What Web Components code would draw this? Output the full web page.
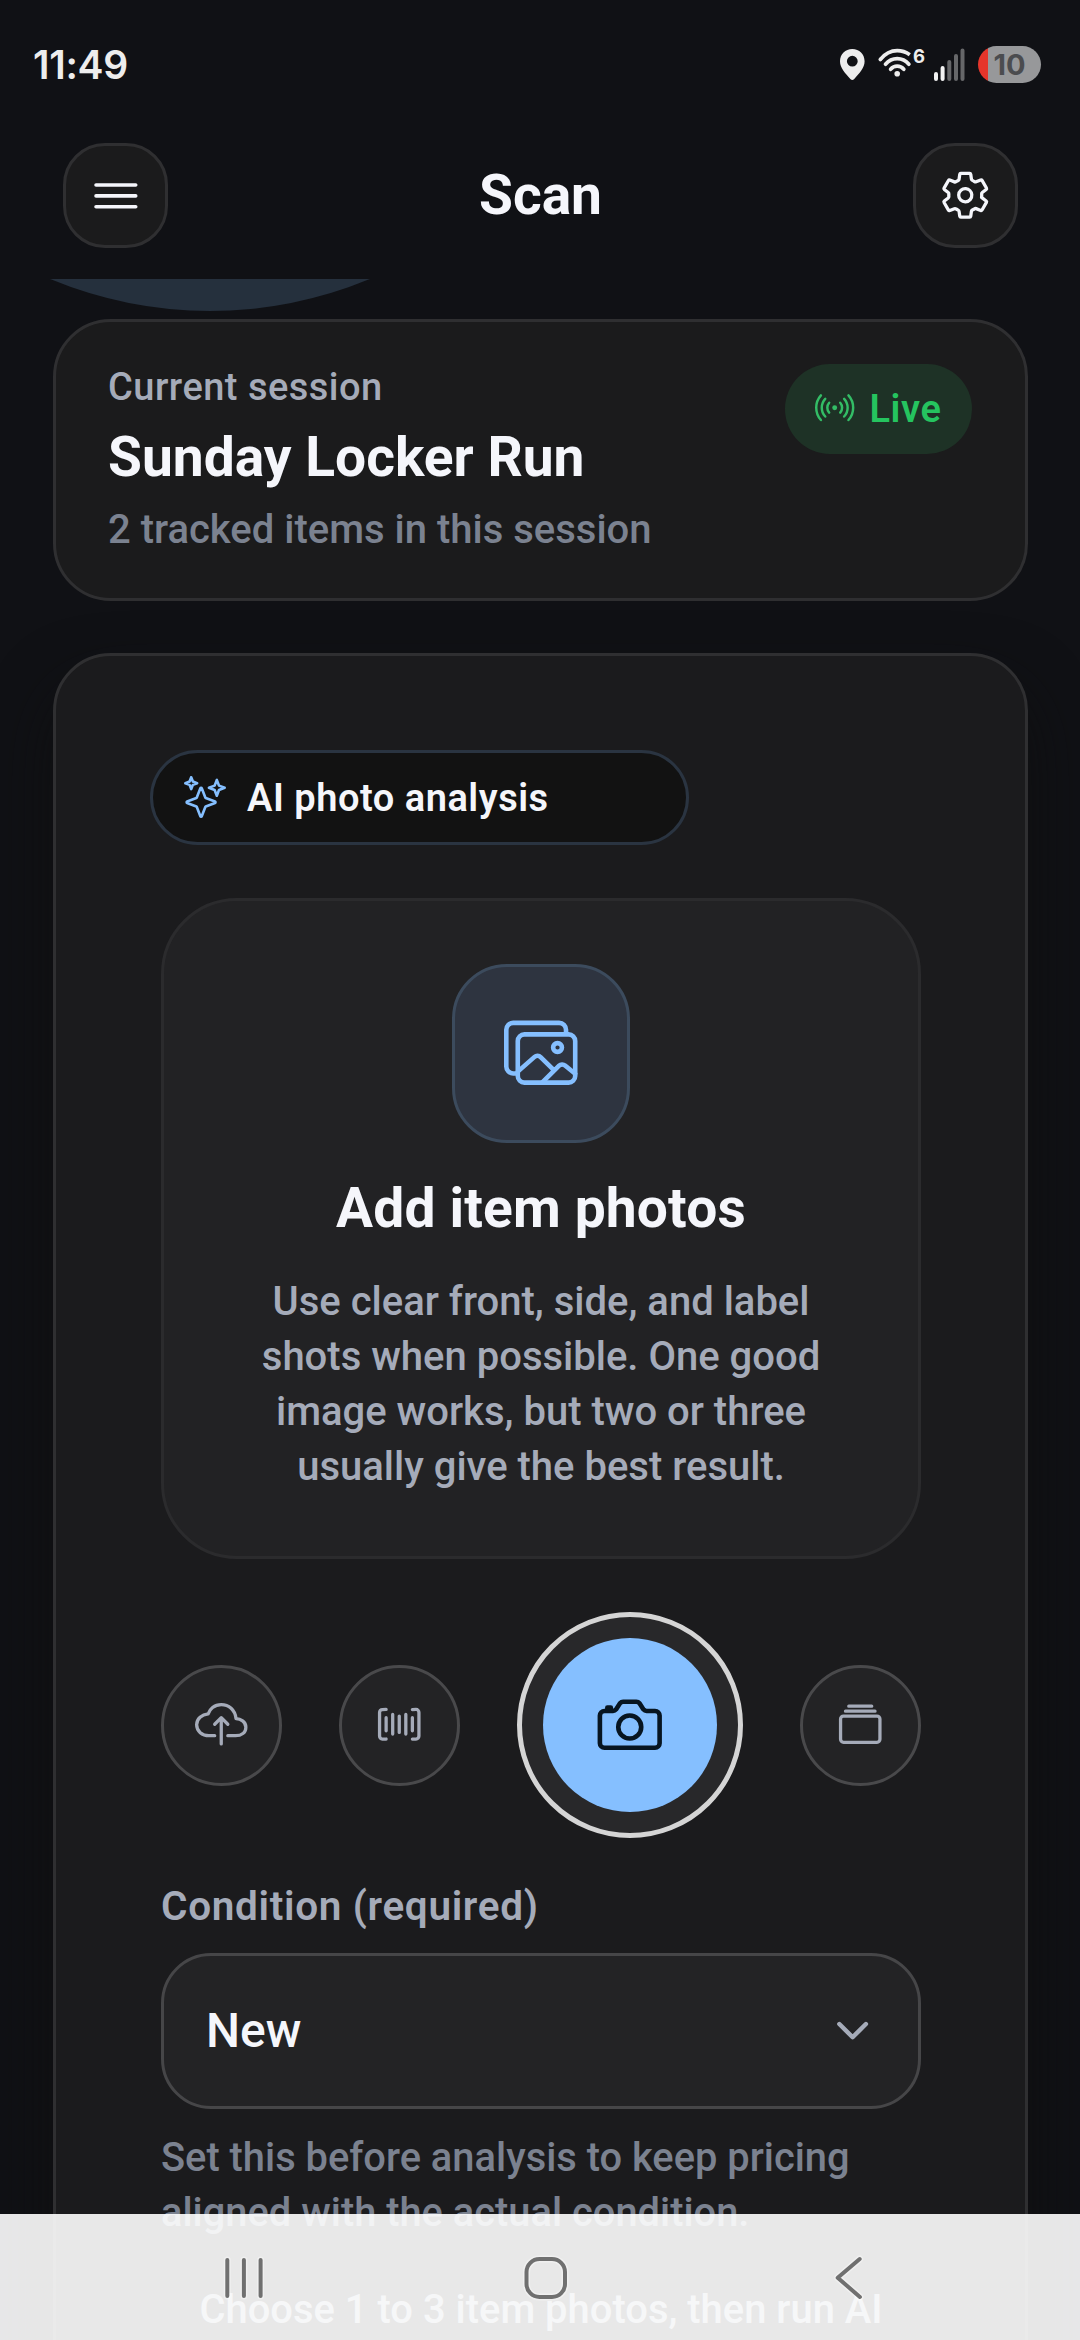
<!DOCTYPE html>
<html lang="en">
<head>
<meta charset="utf-8">
<title>Scan</title>
<style>
  html, body { margin: 0; padding: 0; background: #101115; }
  body { width: 1080px; height: 2340px; overflow: hidden; font-family: Roboto, "Liberation Sans", sans-serif; }
</style>
</head>
<body>
<scan-screen></scan-screen>

<script>
const ICONS = {
  menu: '<path d="M80 160h352M80 256h352M80 352h352" stroke-width="32" stroke-miterlimit="10"/>',
  settings: '<path stroke-width="32" d="M262.29,192.31a64,64,0,1,0,57.4,57.4A64.13,64.13,0,0,0,262.29,192.31ZM416.39,256a154.34,154.34,0,0,1-1.53,20.79l45.21,35.46A10.81,10.81,0,0,1,462.52,326l-42.77,74a10.81,10.81,0,0,1-13.14,4.59l-44.9-18.08a16.11,16.11,0,0,0-15.17,1.75A164.48,164.48,0,0,1,325,400.8a15.94,15.94,0,0,0-8.82,12.14l-6.73,47.89A11.08,11.08,0,0,1,298.77,470H213.23a11.11,11.11,0,0,1-10.69-8.87l-6.72-47.82a16.07,16.07,0,0,0-9-12.22,155.3,155.3,0,0,1-21.46-12.57,16,16,0,0,0-15.11-1.71l-44.89,18.07a10.81,10.81,0,0,1-13.14-4.58l-42.77-74a10.8,10.8,0,0,1,2.45-13.75l38.21-30a16.05,16.05,0,0,0,6-14.08c-.36-4.17-.58-8.33-.58-12.5s.21-8.27.58-12.35a16,16,0,0,0-6.07-13.94l-38.19-30A10.81,10.81,0,0,1,49.48,186l42.77-74a10.81,10.81,0,0,1,13.14-4.59l44.9,18.08a16.11,16.11,0,0,0,15.17-1.75A164.48,164.48,0,0,1,187,111.2a15.94,15.94,0,0,0,8.82-12.14l6.73-47.89A11.08,11.08,0,0,1,213.23,42h85.54a11.11,11.11,0,0,1,10.69,8.87l6.72,47.82a16.07,16.07,0,0,0,9,12.22,155.3,155.3,0,0,1,21.46,12.57,16,16,0,0,0,15.11,1.71l44.89-18.07a10.81,10.81,0,0,1,13.14,4.58l42.77,74a10.8,10.8,0,0,1-2.45,13.75l-38.21,30a16.05,16.05,0,0,0-6.05,14.08C416.17,247.67,416.39,251.83,416.39,256Z"/>',
  radio: '<circle cx="256" cy="256" r="32" fill="currentColor" stroke="none"/><path stroke-width="32" d="M184.25,192.25a96,96,0,0,0,0,127.52M327.77,319.77a96,96,0,0,0,0-127.52M133.28,141.28a168,168,0,0,0,0,229.44M378.72,370.72a168,168,0,0,0,0-229.44M435,416a240.34,240.34,0,0,0,0-320M77,96a240.34,240.34,0,0,0,0,320"/>',
  sparkles: '<path stroke-width="32" d="M259.92,262.91,216.4,149.77a9,9,0,0,0-16.8,0L156.08,262.91a9,9,0,0,1-5.17,5.17L37.77,311.6a9,9,0,0,0,0,16.8l113.14,43.52a9,9,0,0,1,5.17,5.17L199.6,490.23a9,9,0,0,0,16.8,0l43.52-113.14a9,9,0,0,1,5.17-5.17L378.23,328.4a9,9,0,0,0,0-16.8L265.09,268.08A9,9,0,0,1,259.92,262.91Z"/><path stroke-width="32" d="M108 68 88 16 68 68 16 88 68 108 88 160 108 108 160 88ZM426.67 117.33 400 48 373.33 117.33 304 144 373.33 170.67 400 240 426.67 170.67 496 144Z"/>',
  images: '<g stroke-width="32"><path d="M432,112V96a48.14,48.14,0,0,0-48-48H64A48.14,48.14,0,0,0,16,96V352a48.14,48.14,0,0,0,48,48H80"/><rect x="96" y="128" width="400" height="336" rx="46" ry="46"/><ellipse cx="372.92" cy="219.64" rx="30.77" ry="30.55"/><path d="M342.15,372.17,255,285.78a30.93,30.93,0,0,0-42.18-1.21L96,387.64M265.23,464,383.82,346.27a31,31,0,0,1,41.46-1.87L496,402.91"/></g>',
  upload: '<g stroke-width="32"><path d="M320,367.79h76c55,0,100-29.21,100-83.6s-53-81.47-96-83.6c-8.89-85.06-71-136.8-144-136.8-69,0-113.44,45.79-128,91.2-60,5.7-112,43.88-112,106.4s54,106.4,120,106.4h56"/><path d="M320 255.79 256 191.79 192 255.79M256 448.21V207.79"/></g>',
  barcode: '<path stroke-width="32" d="M384,400.33l35.13-.33A29,29,0,0,0,448,371.13V140.87A29,29,0,0,0,419.13,112l-35.13.33M128,112l-36.8.33c-15.88,0-27.2,13-27.2,28.87V371.47c0,15.87,11.32,28.87,27.2,28.87L128,400M384,192V320M320,160V352M256,176V336M192,160V352M128,192V320"/>',
  camera: '<g stroke-width="32"><path d="M350.54,148.68l-26.62-42.06C318.31,100.08,310.62,96,302,96H210c-8.62,0-16.31,4.08-21.92,10.62l-26.62,42.06C155.85,155.23,148.62,160,140,160H80a32,32,0,0,0-32,32V384a32,32,0,0,0,32,32H432a32,32,0,0,0,32-32V192a32,32,0,0,0-32-32H373C364.35,160,356.15,155.23,350.54,148.68Z"/><circle cx="256" cy="272" r="80"/><path d="M124 158V136H100V158"/></g>',
  albums: '<g stroke-width="32"><rect x="64" y="176" width="384" height="256" rx="28.87" ry="28.87"/><path d="M144 80H368M112 128H400" stroke-miterlimit="10"/></g>',
  chevron: '<path stroke-width="48" d="M112 184 256 328 400 184"/>'
};

/* <ui-icon name size>: stroked line icon on a 512 grid, coloured by currentColor */
customElements.define('ui-icon', class extends HTMLElement {
  connectedCallback() {
    const size = this.getAttribute('size');
    this.attachShadow({ mode: 'open' }).innerHTML = `
      <style>
        :host { display: block; flex: none; width: ${size}px; height: ${size}px; }
        svg { display: block; width: 100%; height: 100%; fill: none; stroke: currentColor; stroke-linecap: round; stroke-linejoin: round; }
      </style>
      <svg viewBox="0 0 512 512" overflow="visible">${ICONS[this.getAttribute('name')]}</svg>`;
  }
});

const define = (tag, html) => {
  const template = document.createElement('template');
  template.innerHTML = html;
  customElements.define(tag, class extends HTMLElement {
    constructor() {
      super();
      this.attachShadow({ mode: 'open' }).append(template.content.cloneNode(true));
    }
  });
};

define('status-bar', `
  <style>
    :host { display: flex; align-items: flex-start; justify-content: space-between; box-sizing: border-box; height: 129px; padding: 0 39px 0 33px; color: #ededed; font-family: Inter, Roboto, sans-serif; flex: none; }
    .time { font-size: 39px; font-weight: 600; line-height: 48px; letter-spacing: -.300px; margin-top: 41px; }
    .icons { display: flex; align-items: flex-start; margin-top: 46px; }
    svg { display: block; flex: none; }
    .six { font-size: 18.5px; font-weight: 700; line-height: 20px; width: 12px; margin-left: 1px; }
    .battery { width: 63px; height: 37px; border-radius: 18.5px; margin-left: 12px; background: linear-gradient(90deg, #e5352b 9.5px, #97989a 9.5px); color: #4b4c4f; font-size: 29px; font-weight: 700; line-height: 38px; text-align: center; }
  </style>
  <div class="time">11:49</div>
  <div class="icons">
    <svg width="27" height="37" viewBox="0 0 27 37"><path fill="#ededed" fill-rule="evenodd" d="M13.3 3C6.300 3 1 8.200 1 15.200c0 6.600 5.200 12 10.600 18 1 1.100 2.400 1.100 3.400 0 5.400-6 10.600-11.400 10.600-18C25.600 8.200 20.300 3 13.300 3Zm0 6.800a5.400 5.400 0 1 1 0 10.800 5.400 5.400 0 0 1 0-10.800Z"/></svg>
    <svg width="46" height="37" viewBox="867 46 46 37">
      <g fill="none" stroke="#ededed" stroke-width="3.700" stroke-linecap="round">
        <path d="M881.200 59.600Q888.500 50.700 898.200 50.700 905 50.700 910.800 54.800" stroke-linecap="butt"/>
        <path d="M881.300 59.500l.1-.1"/>
        <path d="M886.500 64.200Q891.300 58.600 898.200 58.600T909.900 64.200"/>
        <path d="M891.600 69.300Q894.300 66.200 898.200 66.200T904.800 69.300"/>
      </g>
      <circle cx="898.200" cy="73.800" r="2.800" fill="#ededed"/>
    </svg>
    <div class="six">6</div>
    <svg width="41" height="37" viewBox="925 46 41 37">
      <g stroke-width="4" stroke-linecap="round">
        <path stroke="#f2f2f2" d="M936 74v5M942.600 68v11"/>
        <path stroke="#666769" d="M949.300 62v17M956 56v23M962.500 50.500V79"/>
      </g>
    </svg>
    <div class="battery">10</div>
  </div>`);

define('icon-button', `
  <style>
    :host { display: flex; align-items: center; justify-content: center; box-sizing: border-box; width: 105px; height: 105px; border: 3px solid #2f2f31; border-radius: 42px; background: #1b1b1c; color: #f5f6fb; }
  </style>
  <slot></slot>`);

define('app-header', `
  <style>
    :host { display: flex; align-items: center; justify-content: space-between; box-sizing: border-box; height: 150px; padding: 14px 62px 31px 63px; flex: none; }
    h1 { margin: 0 0 1px; font-size: 55.125px; font-weight: 700; line-height: 72px; color: #f5f6fb; }
  </style>
  <icon-button><ui-icon name="menu" size="57.750"></ui-icon></icon-button>
  <h1><slot></slot></h1>
  <icon-button><ui-icon name="settings" size="52.500"></ui-icon></icon-button>`);

define('live-badge', `
  <style>
    :host { display: flex; align-items: center; box-sizing: border-box; height: 90px; width: 187px; padding-left: 30px; gap: 15px; border-radius: 45px; background: #1e3226; color: #25c45f; font-size: 38px; font-weight: 600; letter-spacing: .600px; line-height: 48px; }
    ui-icon { color: #33bd66; margin-top: -2px; }
  </style>
  <ui-icon name="radio" size="39.400"></ui-icon><span><slot></slot></span>`);

define('session-card', `
  <style>
    :host { display: flex; align-items: flex-start; justify-content: space-between; box-sizing: border-box; height: 282px; margin: 40px 52px 0 53px; padding: 42px 53px 0 52px; border: 3px solid #2f2f31; border-radius: 57.750px; background: #1b1b1c; position: relative; flex: none; }
    .label { font-size: 38px; font-weight: 500; line-height: 47px; letter-spacing: .480px; color: #a5abb9; }
    .name { font-size: 55.125px; font-weight: 700; line-height: 72px; margin-top: 10px; color: #f5f6fb; }
    .meta { font-size: 40px; font-weight: 500; line-height: 55px; margin-top: 9px; color: #7b8290; }
  </style>
  <div>
    <div class="label"><slot name="label"></slot></div>
    <div class="name"><slot name="name"></slot></div>
    <div class="meta"><slot name="meta"></slot></div>
  </div>
  <slot name="badge"></slot>`);

define('analysis-chip', `
  <style>
    :host { display: flex; align-items: center; box-sizing: border-box; width: 539px; height: 95px; margin-left: -11px; padding-left: 31px; gap: 21px; border: 3px solid #2a3441; border-radius: 47.500px; background: #121212; color: #f5f6fb; font-size: 38px; font-weight: 600; letter-spacing: .520px; line-height: 48px; }
    ui-icon { color: #85bfff; margin-top: -1px; }
  </style>
  <ui-icon name="sparkles" size="42"></ui-icon><span><slot></slot></span>`);

define('photo-dropzone', `
  <style>
    :host { display: flex; flex-direction: column; align-items: center; box-sizing: border-box; height: 661px; margin-top: 53px; padding-top: 63px; border: 3px solid #2b2b2d; border-radius: 76px; background: #222224; }
    .tile { display: flex; align-items: center; justify-content: center; box-sizing: border-box; width: 178px; height: 179px; border: 3px solid #3c4b5d; border-radius: 55px; background: #2e3440; color: #85bfff; }
    .tile ui-icon { margin-top: -2px; }
    h2 { margin: 29px 0 0; font-size: 55.125px; font-weight: 700; line-height: 72px; letter-spacing: .150px; color: #f5f6fb; }
    p { margin: 30px 0 0; width: 600px; font-size: 40px; font-weight: 500; line-height: 55.125px; text-align: center; color: #a5abb9; }
  </style>
  <div class="tile"><ui-icon name="images" size="73.500"></ui-icon></div>
  <h2><slot name="title"></slot></h2>
  <p><slot></slot></p>`);

define('round-action', `
  <style>
    :host { display: flex; align-items: center; justify-content: center; box-sizing: border-box; width: 121px; height: 121px; border: 3px solid #49494b; border-radius: 50%; background: #232325; color: #a5abb9; }
    ::slotted(ui-icon) { margin: -2px 1px 0 0; }
  </style>
  <slot></slot>`);

define('shutter-button', `
  <style>
    :host { display: flex; align-items: center; justify-content: center; box-sizing: border-box; width: 226px; height: 226px; border: 5px solid #d5d5d5; border-radius: 50%; background: #28282a; }
    .core { display: flex; align-items: center; justify-content: center; width: 174px; height: 174px; border-radius: 50%; background: #85bfff; color: #071521; margin-top: -1px; }
    ui-icon { margin-right: 1px; }
  </style>
  <div class="core"><ui-icon name="camera" size="73.500"></ui-icon></div>`);

define('capture-controls', `
  <style>:host { display: flex; align-items: center; justify-content: space-between; margin-top: 53px; height: 226px; }</style>
  <round-action><ui-icon name="upload" size="52.500"></ui-icon></round-action>
  <round-action><ui-icon name="barcode" size="52.500"></ui-icon></round-action>
  <shutter-button></shutter-button>
  <round-action><ui-icon name="albums" size="52.500"></ui-icon></round-action>`);

define('condition-field', `
  <style>
    :host { display: block; margin-top: 43px; }
    .label { font-size: 40.500px; font-weight: 600; line-height: 50px; letter-spacing: .670px; color: #a5abb9; }
    .select { display: flex; align-items: center; justify-content: space-between; box-sizing: border-box; height: 156px; margin-top: 22px; padding: 0 42px; border: 3px solid #464648; border-radius: 50px; background: #232325; color: #f5f6fb; font-size: 48px; font-weight: 500; line-height: 60px; }
    .select ui-icon { color: #a5abb9; }
    .help { font-size: 39.850px; font-weight: 500; line-height: 55px; margin-top: 21px; color: #7b8290; }
  </style>
  <div class="label"><slot name="label"></slot></div>
  <div class="select"><span><slot name="value"></slot></span><ui-icon name="chevron" size="47.250"></ui-icon></div>
  <div class="help"><slot name="help"></slot></div>`);

define('scan-card', `
  <style>
    :host { display: block; box-sizing: border-box; height: 1900px; margin: 52px 52px 0 53px; padding: 94px 104px 0 105px; border: 3px solid #2f2f31; border-radius: 57.750px; background: #1b1b1d; box-shadow: 0 32px 63px rgba(15,15,15,.75); position: relative; flex: none; }
    .hint { margin-top: 42px; font-size: 39.950px; font-weight: 500; line-height: 55px; text-align: center; color: #a5abb9; white-space: nowrap; }
  </style>
  <slot></slot>
  <div class="hint"><slot name="hint"></slot></div>`);

define('system-nav', `
  <style>
    :host { display: block; position: absolute; left: 0; bottom: 0; width: 1080px; height: 126px; background: rgba(255,255,255,.9); }
    svg { display: block; }
  </style>
  <svg width="1080" height="126" viewBox="0 2214 1080 126" fill="none" stroke-linecap="round" stroke-linejoin="round">
    <defs><g id="keys">
      <path d="M227.300 2260v36M243.900 2260v36M260.600 2260v36"/>
      <rect x="526.500" y="2259" width="38.500" height="38" rx="13"/>
      <path d="M859.700 2259 837.700 2277.700 859.900 2297"/>
    </g></defs>
    <use href="#keys" stroke="rgba(255,255,255,.35)" stroke-width="7"/>
    <use href="#keys" stroke="#707070" stroke-width="4"/>
  </svg>`);

define('scan-screen', `
  <style>
    :host { display: flex; flex-direction: column; position: relative; width: 1080px; height: 2340px; overflow: hidden; background: #101115; font-family: Roboto, "Liberation Sans", sans-serif; }
    main { display: flex; flex-direction: column; flex: 1; min-height: 0; overflow: hidden; position: relative; }
    .glow { position: absolute; left: -206px; top: -800px; width: 832px; height: 832px; border-radius: 50%; background: #25303d; }
  </style>
  <status-bar></status-bar>
  <app-header>Scan</app-header>
  <main>
    <div class="glow"></div>
    <session-card>
      <span slot="label">Current session</span>
      <span slot="name">Sunday Locker Run</span>
      <span slot="meta">2 tracked items in this session</span>
      <live-badge slot="badge">Live</live-badge>
    </session-card>
    <scan-card>
      <analysis-chip>AI photo analysis</analysis-chip>
      <photo-dropzone>
        <span slot="title">Add item photos</span>
        Use clear front, side, and label shots when possible. One good image works, but two or three usually give the best result.
      </photo-dropzone>
      <capture-controls></capture-controls>
      <condition-field>
        <span slot="label">Condition (required)</span>
        <span slot="value">New</span>
        <span slot="help">Set this before analysis to keep pricing aligned with the actual condition.</span>
      </condition-field>
      <span slot="hint">Choose 1 to 3 item photos, then run AI</span>
    </scan-card>
  </main>
  <system-nav></system-nav>`);
</script>
</body>
</html>
